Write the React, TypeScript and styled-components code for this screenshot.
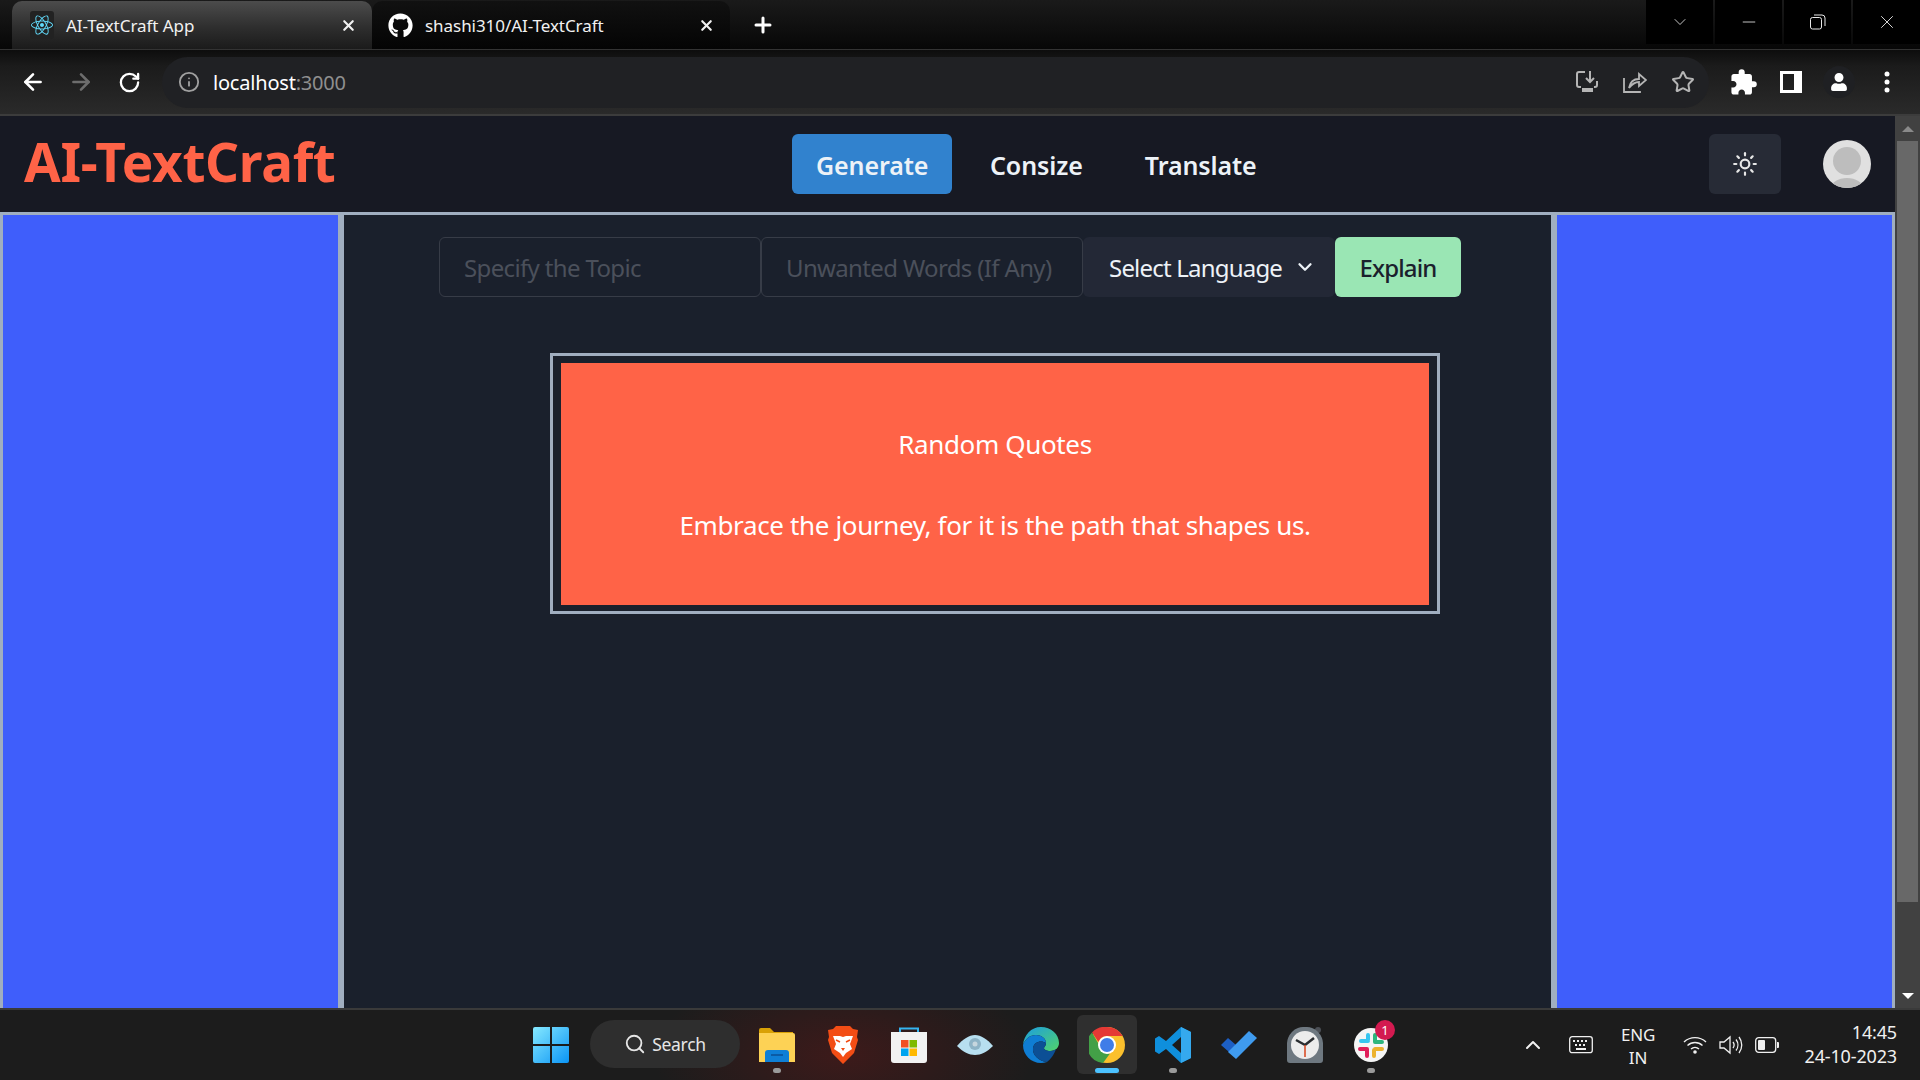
import React from "react";
import styled, { createGlobalStyle } from "styled-components";
import { ArrowLeft, ArrowRight, RotateCw, Info, Star, ChevronDown, ChevronUp, Sun, Search, X, Plus, Minus } from "lucide-react";
import { FaGithub, FaReact, FaUser } from "react-icons/fa";
import { MdExtension } from "react-icons/md";

const GlobalStyle = createGlobalStyle`
  html, body { margin: 0; padding: 0; background: #171923; }
  * { box-sizing: border-box; }
  body { font-family: "Noto Sans", "Open Sans", sans-serif; overflow: hidden; }
`;

const Screen = styled.div`
  width: 1920px;
  height: 1080px;
  display: flex;
  flex-direction: column;
  overflow: hidden;
`;

/* ---- browser chrome ---- */

const TabStrip = styled.div`
  height: 50px;
  flex: none;
  display: flex;
  align-items: flex-end;
  padding-left: 12px;
  background: linear-gradient(#1a1a1a, #070707);
  border-bottom: 1px solid #333;
`;

const Tab = styled.div<{ $active?: boolean }>`
  width: ${(p) => (p.$active ? 360 : 358)}px;
  height: 48px;
  display: flex;
  align-items: center;
  padding: 0 15px 0 ${(p) => (p.$active ? 18 : 16)}px;
  gap: 12px;
  border-radius: 10px 10px 0 0;
  color: #f1f1f1;
  font-size: 17px;
  letter-spacing: -0.05px;
  background: ${(p) => (p.$active ? "linear-gradient(#4c4c4c, #2e2e2e 55%, #1b1b1b)" : "linear-gradient(#111, #040404)")};
`;

const TabTitle = styled.span`
  flex: 1;
`;

const Favicon = styled.span`
  width: 24px;
  height: 28px;
  display: flex;
  align-items: center;
  justify-content: center;
  background: #222;
  border-radius: 3px;
  color: #61dafb;
  font-size: 22px;
`;

const GitIcon = styled.span`
  display: flex;
  color: #fff;
  font-size: 25px;
`;

const NewTab = styled.div`
  width: 36px;
  height: 36px;
  margin: 0 0 6px 15px;
  display: flex;
  align-items: center;
  justify-content: center;
  color: #fff;
`;

const WindowControls = styled.div`
  margin-left: auto;
  align-self: flex-start;
  display: flex;
  gap: 2px;
`;

const WindowButton = styled.div`
  width: 67px;
  height: 44px;
  background: #000;
  display: flex;
  align-items: center;
  justify-content: center;
  color: #e8e8e8;
`;

const Toolbar = styled.div`
  height: 66px;
  flex: none;
  display: flex;
  align-items: center;
  background: linear-gradient(#0d0d0d, #1b1b1b 25%, #2a2a2a);
  border-bottom: 2px solid #3c3c3c;
`;

const NavIcon = styled.div<{ $dim?: boolean }>`
  width: 48px;
  height: 48px;
  flex: none;
  display: flex;
  align-items: center;
  justify-content: center;
  color: ${(p) => (p.$dim ? "#6d6d6d" : "#fff")};
`;

const BackGroup = styled.div`
  display: flex;
  padding-left: 9px;
  width: 162px;
`;

const AddressBar = styled.div`
  width: 1547px;
  height: 51px;
  display: flex;
  align-items: center;
  border-radius: 26px;
  background: #202124;
  padding-left: 16px;
  font-size: 20px;
  letter-spacing: -0.2px;
  color: #fff;
`;

const Host = styled.span`
  margin-left: 13px;
`;

const Port = styled.span`
  color: #8f8f8f;
`;

const AddressTools = styled.div`
  margin-left: auto;
  display: flex;
  padding-right: 2px;
  color: #b5b5b5;
`;

const BarIcon = styled.div`
  width: 48px;
  height: 48px;
  display: flex;
  align-items: center;
  justify-content: center;
`;

const ChromeTools = styled.div`
  display: flex;
  padding-left: 10px;
  color: #fff;
`;

const ProfileCircle = styled.div`
  width: 32px;
  height: 32px;
  border-radius: 50%;
  background: #1f2023;
  display: flex;
  align-items: center;
  justify-content: center;
  font-size: 18px;
`;

/* ---- the page ---- */

const Viewport = styled.div`
  flex: 1;
  min-height: 0;
  display: flex;
`;

const Page = styled.div`
  width: 1895px;
  display: flex;
  flex-direction: column;
  background: #1a202c;
`;

const Navbar = styled.header`
  height: 96px;
  flex: none;
  display: flex;
  align-items: center;
  background: #171923;
  position: relative;
`;

const Logo = styled.h1`
  margin: 0 0 5px 24px;
  width: 768px;
  font-size: 53px;
  font-weight: 700;
  letter-spacing: -0.3px;
  line-height: 1;
  color: #ff6347;
`;

const NavLinks = styled.nav`
  display: flex;
  gap: 14px;
`;

const NavLink = styled.a<{ $active?: boolean }>`
  width: ${(p) => (p.$active ? "160px" : "auto")};
  height: 60px;
  padding: 2px 24px 0;
  display: flex;
  align-items: center;
  border-radius: 6px;
  font-size: 25px;
  font-weight: 600;
  letter-spacing: -0.1px;
  color: #edf2f7;
  background: ${(p) => (p.$active ? "#3182ce" : "transparent")};
`;

const NavRight = styled.div`
  margin-left: auto;
  display: flex;
  align-items: center;
  gap: 42px;
  padding-right: 24px;
`;

const ThemeButton = styled.button`
  width: 72px;
  height: 60px;
  border: 0;
  border-radius: 6px;
  background: #272b36;
  color: #e8e8e8;
  display: flex;
  align-items: center;
  justify-content: center;
`;

const Avatar = styled.div`
  width: 48px;
  height: 48px;
  border-radius: 50%;
  background: #e0e0e0;
  position: relative;
  overflow: hidden;
  &::before {
    content: "";
    position: absolute;
    left: 10px;
    top: 7px;
    width: 28px;
    height: 28px;
    border-radius: 50%;
    background: #bdbdbd;
  }
  &::after {
    content: "";
    position: absolute;
    left: 8px;
    top: 38px;
    width: 32px;
    height: 20px;
    border-radius: 50%;
    background: #bdbdbd;
  }
`;

const Panels = styled.div`
  flex: 1;
  min-height: 0;
  display: flex;
`;

const Aside = styled.aside`
  width: 341px;
  flex: none;
  background: #3f5efb;
  border: 3px solid #a0aec0;
  border-bottom: 0;
`;

const Main = styled.main`
  flex: 1;
  border: 3px solid #a0aec0;
  border-bottom: 0;
  padding: 22px 0 0 95px;
`;

const QueryRow = styled.form`
  width: 1022px;
  height: 60px;
  display: flex;
  margin-bottom: 56px;
`;

const TextInput = styled.input`
  width: 322px;
  height: 60px;
  padding: 0 24px;
  border: 1px solid #373c47;
  border-radius: 6px;
  background: transparent;
  color: #fff;
  font-family: inherit;
  font-size: 24px;
  letter-spacing: -0.65px;
  outline: none;
  &::placeholder {
    color: #4b505b;
    opacity: 1;
  }
`;

const LanguageSelect = styled.button`
  width: 252px;
  height: 60px;
  flex: none;
  display: flex;
  align-items: center;
  justify-content: space-between;
  padding: 0 19px 0 26px;
  border: 0;
  border-radius: 6px;
  background: #232836;
  color: #edf2f7;
  font-family: inherit;
  font-size: 24px;
  letter-spacing: -0.8px;
`;

const ExplainButton = styled.button`
  width: 126px;
  height: 60px;
  flex: none;
  border: 0;
  border-radius: 6px;
  background: #9ae6b4;
  color: #1a202c;
  font-family: inherit;
  font-size: 24px;
  font-weight: 500;
  letter-spacing: -0.85px;
`;

const QuoteFrame = styled.section`
  width: 890px;
  height: 261px;
  margin-left: 111px;
  border: 3px solid #a0aec0;
  padding: 7px 8px 6px 8px;
`;

const QuoteBody = styled.div`
  height: 100%;
  background: #ff6347;
  padding-top: 63px;
  display: flex;
  flex-direction: column;
  align-items: center;
  gap: 45px;
  color: #fff;
  font-size: 26px;
  line-height: 36px;
  letter-spacing: -0.36px;
`;

const Scrollbar = styled.div`
  width: 25px;
  display: flex;
  flex-direction: column;
  align-items: center;
  background: #414141;
`;

const ScrollArrow = styled.div<{ $down?: boolean; $color: string }>`
  width: 0;
  height: 0;
  flex: none;
  border-left: 6px solid transparent;
  border-right: 6px solid transparent;
  ${(p) => (p.$down ? `border-top: 6px solid ${p.$color}; margin-top: auto; margin-bottom: 9px;` : `border-bottom: 6px solid ${p.$color}; margin-top: 10px;`)}
`;

const ScrollThumb = styled.div`
  width: 21px;
  height: 761px;
  margin-top: 9px;
  background: #686868;
`;

/* ---- taskbar ---- */

const Taskbar = styled.footer`
  height: 72px;
  flex: none;
  display: grid;
  grid-template-columns: 518px auto 1fr;
  border-top: 2px solid #3a3a3a;
  background: radial-gradient(ellipse 190px 90px at 843px 45px, #3d1a1a, transparent), #1c1c1c;
`;

const TaskIcons = styled.div`
  display: flex;
  align-items: flex-start;
`;

const TaskItem = styled.div`
  width: 66px;
  height: 70px;
  flex: none;
  padding: 5px 3px 6px;
  position: relative;
`;

const TaskTile = styled.div<{ $active?: boolean }>`
  height: 59px;
  display: flex;
  align-items: center;
  justify-content: center;
  border-radius: 6px;
  background: ${(p) => (p.$active ? "#2f2f2f" : "transparent")};
`;

const RunningMark = styled.span<{ $active?: boolean }>`
  position: absolute;
  left: 50%;
  bottom: 7px;
  width: ${(p) => (p.$active ? 24 : 8)}px;
  height: 5px;
  margin-left: ${(p) => (p.$active ? -12 : -4)}px;
  border-radius: 3px;
  background: ${(p) => (p.$active ? "#4cc2ff" : "#9a9a9a")};
`;

const Badge = styled.span`
  position: absolute;
  left: 37px;
  top: 10px;
  width: 20px;
  height: 20px;
  border-radius: 50%;
  background: #d31a50;
  color: #fff;
  font-size: 13px;
  line-height: 20px;
  text-align: center;
`;

const SearchPill = styled.div`
  width: 150px;
  height: 48px;
  margin: 10px 4px 0 6px;
  flex: none;
  display: flex;
  align-items: center;
  justify-content: center;
  gap: 6px;
  border-radius: 24px;
  background: #2e2e2e;
  color: #e6e6e6;
  font-size: 17.5px;
  letter-spacing: -0.3px;
`;

const Tray = styled.div`
  display: flex;
  align-items: center;
  justify-content: flex-end;
  padding-right: 23px;
  color: #f0f0f0;
`;

const TraySlot = styled.div<{ $w: number }>`
  width: ${(p) => p.$w}px;
  flex: none;
  display: flex;
  justify-content: center;
`;

const Lang = styled.div`
  width: 72px;
  padding-right: 6px;
  text-align: center;
  font-size: 17px;
  line-height: 23px;
  letter-spacing: -0.2px;
  margin-top: 1px;
`;

const Clock = styled.div`
  width: 112px;
  text-align: right;
  font-size: 18px;
  line-height: 24px;
  letter-spacing: -0.15px;
  margin-bottom: 3px;
`;

/* ---- drawn icons ---- */

const DownloadIcon = () => (
  <svg width="24" height="24" viewBox="0 0 24 24" fill="none" stroke="#b5b5b5" strokeWidth="2">
    <path d="M10 2H4a2 2 0 0 0-2 2v11a2 2 0 0 0 2 2h2M22 11v4a2 2 0 0 1-2 2h-1" />
    <path d="M15 1v10M11 8l4 4 4-4" />
    <path d="M7 18h11v4H7z" fill="#b5b5b5" stroke="none" />
  </svg>
);

const ShareIcon = () => (
  <svg width="24" height="24" viewBox="0 0 24 24" fill="none" stroke="#b5b5b5" strokeWidth="1.8">
    <path d="M1 8v14h16v-1" />
    <path d="M6 18c1-6 5-9 10-9V4l7 6-7 6v-4c-4 0-7 2-10 6z" />
  </svg>
);

const SidebarIcon = () => (
  <svg width="22" height="22" viewBox="0 0 22 22">
    <path d="M0 0h22v22H0zM3 3v16h11V3z" fill="#fff" fillRule="evenodd" />
  </svg>
);

const Dots = () => (
  <svg width="6" height="22" viewBox="0 0 6 22" fill="#fff">
    <circle cx="3" cy="3" r="2.5" />
    <circle cx="3" cy="11" r="2.5" />
    <circle cx="3" cy="19" r="2.5" />
  </svg>
);

const RestoreIcon = () => (
  <svg width="16" height="16" viewBox="0 0 16 16" fill="none" stroke="#e8e8e8" strokeWidth="1">
    <rect x="0.5" y="3.5" width="11" height="11.5" rx="2" />
    <path d="M4 1h8a3 3 0 0 1 3 3v8" />
  </svg>
);

const WinLogo = () => (
  <svg width="36" height="36" viewBox="0 0 36 36">
    <defs>
      <linearGradient id="win" x1="0" y1="0" x2="1" y2="1">
        <stop offset="0" stopColor="#86e9ff" />
        <stop offset="1" stopColor="#0a94f5" />
      </linearGradient>
    </defs>
    <path d="M2 0h15v17H0V2a2 2 0 0 1 2-2zM19 0h15a2 2 0 0 1 2 2v15H19zM0 19h17v17H2a2 2 0 0 1-2-2zM19 19h17v15a2 2 0 0 1-2 2H19z" fill="url(#win)" />
  </svg>
);

const FolderIcon = () => (
  <svg width="36" height="34" viewBox="0 0 36 34">
    <path d="M0 2a2 2 0 0 1 2-2h9l4 4h19v6H0z" fill="#d9a106" />
    <path d="M0 5h34a2 2 0 0 1 2 2v27H0z" fill="#fdd255" />
    <path d="M6 34V25a3 3 0 0 1 3-3h18a3 3 0 0 1 3 3v9z" fill="#0f7fd6" />
    <path d="M12 27h12" stroke="#0b4f94" strokeWidth="1.5" />
  </svg>
);

const BraveIcon = () => (
  <svg width="30" height="38" viewBox="0 0 30 38">
    <path d="M8 0h14l3 3 5 1-1 7 1 3-4 13-11 11L4 27 0 14l1-3-1-7 5-1z" fill="#f34d15" />
    <path d="M5 10l7 0 3 1 3-1 7 0-3 8 2 5-6 4-3 4-3-4-6-4 2-5z" fill="#fff" />
    <path d="M13 22h4l-2 3z" fill="#f34d15" />
    <path d="M8 14l4 2M22 14l-4 2" stroke="#f34d15" strokeWidth="1.5" />
  </svg>
);

const StoreIcon = () => (
  <svg width="36" height="36" viewBox="0 0 36 36">
    <path d="M9 6V1.500h18V6" fill="none" stroke="#35b4f0" strokeWidth="2" />
    <path d="M0 5h36v28a3 3 0 0 1-3 3H3a3 3 0 0 1-3-3z" fill="#f2f2f2" />
    <path d="M10 13h7.500v7.500H10z" fill="#f25022" />
    <path d="M18.500 13H26v7.500h-7.500z" fill="#7fba00" />
    <path d="M10 21.500h7.500V29H10z" fill="#00a4ef" />
    <path d="M18.500 21.500H26V29h-7.500z" fill="#ffb900" />
  </svg>
);

const EyeIcon = () => (
  <svg width="36" height="20" viewBox="0 0 36 20">
    <path d="M0 11C6 4 12 0 18 0s12 4 18 11c-6 6-12 9-18 9S6 17 0 11z" fill="#b7dff0" />
    <circle cx="18" cy="9" r="6" fill="#8db3c6" />
    <circle cx="18" cy="9" r="2.500" fill="#c6d6de" />
  </svg>
);

const EdgeIcon = () => (
  <svg width="36" height="36" viewBox="0 0 36 36">
    <defs>
      <linearGradient id="edgeTop" x1="0" y1="0" x2="1" y2="1">
        <stop offset="0" stopColor="#1b9de2" />
        <stop offset="1" stopColor="#51d36a" />
      </linearGradient>
    </defs>
    <path d="M18 0c10 0 18 7 18 16 0 5-4 8-9 8-3 0-6-1-6-3 0-1 2-2 2-5 0-5-5-8-10-8-6 0-11 4-13 10C1 8 8 0 18 0z" fill="url(#edgeTop)" />
    <path d="M0 18C2 12 7 8 13 8c5 0 10 3 10 8-4-3-12-2-13 5-1 7 6 13 14 14-2 .7-4 1-6 1C8 36 0 28 0 18z" fill="#0f7dd3" />
    <path d="M10 21c1-7 9-8 13-5 0 3-2 4-2 5 0 2 3 3 6 3 2 0 4-.5 6-2-2 6-6 11-9 13-8-1-15-7-14-14z" fill="#0c4f95" />
  </svg>
);

const ChromeIcon = () => (
  <svg width="36" height="36" viewBox="0 0 36 36">
    <circle cx="18" cy="18" r="18" fill="#fbc02d" />
    <path d="M18 0a18 18 0 0 1 15.600 9H18a9 9 0 0 0-8.500 6L3 5.500A18 18 0 0 1 18 0z" fill="#e53935" />
    <path d="M3 5.500l7.500 13A9 9 0 0 0 21 26.500L14 36A18 18 0 0 1 3 5.500z" fill="#43a047" />
    <circle cx="18" cy="18" r="9" fill="#fff" />
    <circle cx="18" cy="18" r="7" fill="#3f7de8" />
  </svg>
);

const VsCodeIcon = () => (
  <svg width="36" height="36" viewBox="0 0 36 36">
    <path d="M26 0l10 5v26l-10 5-15-14-7 5-4-2.500V11.500L4 9l7 5zM26 10l-9 8 9 8z" fill="#0f8fdc" fillRule="evenodd" />
    <path d="M26 0l10 5v26l-10 5z" fill="#35a9ee" />
  </svg>
);

const TodoIcon = () => (
  <svg width="36" height="28" viewBox="0 0 36 28">
    <path d="M0 14l7-7 8 7-7 7z" fill="#1d5fc4" />
    <path d="M7 21l4-4L28 0l8 7-21 21z" fill="#3f9bef" />
  </svg>
);

const ClockIcon = () => (
  <svg width="36" height="36" viewBox="0 0 36 36">
    <circle cx="31" cy="3" r="3" fill="#4b4f55" />
    <path d="M18 0a17 17 0 0 1 18 18v15a3 3 0 0 1-3 3H3a3 3 0 0 1-3-3V18A17 17 0 0 1 18 0z" fill="#6e7880" />
    <circle cx="18" cy="18" r="14" fill="#ececec" />
    <path d="M18 18L9 13M18 18l9-7" stroke="#2a2d30" strokeWidth="2.500" />
    <path d="M18 18v12" stroke="#d8441c" strokeWidth="1.500" />
  </svg>
);

const SlackIcon = () => (
  <svg width="36" height="36" viewBox="0 0 36 36">
    <circle cx="18" cy="18" r="17" fill="#f5f5f5" />
    <g strokeWidth="4" strokeLinecap="round">
      <path d="M15 8v5M8 14h7" stroke="#36c5f0" />
      <path d="M22 8v7M23 15h6" stroke="#2eb67d" />
      <path d="M21 29v-6M22 22h7" stroke="#ecb22e" />
      <path d="M14 29v-7M7 22h7" stroke="#e01e5a" />
    </g>
  </svg>
);

const KeyboardIcon = () => (
  <svg width="24" height="18" viewBox="0 0 24 18" fill="none" stroke="#f0f0f0" strokeWidth="1.300">
    <rect x="0.700" y="0.700" width="22.600" height="16" rx="2.500" />
    <path d="M4 5h2M8 5h2M12 5h2M16 5h2M6 9h2M10 9h2M14 9h2M7 13h10" strokeWidth="1.800" />
  </svg>
);

const WifiIcon = () => (
  <svg width="24" height="18" viewBox="0 0 24 18" fill="none" stroke="#f0f0f0" strokeWidth="1.400">
    <path d="M1 6a16 16 0 0 1 22 0M4.500 9.500a11 11 0 0 1 15 0M8 13a6 6 0 0 1 8 0" />
    <circle cx="12" cy="16" r="1.800" fill="#f0f0f0" stroke="none" />
  </svg>
);

const SpeakerIcon = () => (
  <svg width="24" height="20" viewBox="0 0 24 20" fill="none" stroke="#f0f0f0" strokeWidth="1.300">
    <path d="M1 7v6h4l6 5V2L5 7z" />
    <path d="M14 7a5 5 0 0 1 0 6M17 4.500a9 9 0 0 1 0 11M20 2a13 13 0 0 1 0 16" />
  </svg>
);

const BatteryIcon = () => (
  <svg width="24" height="16" viewBox="0 0 24 16" fill="none">
    <rect x="0.700" y="0.700" width="20" height="14.600" rx="3" stroke="#f0f0f0" strokeWidth="1.300" />
    <rect x="3" y="3" width="7" height="10" rx="1" fill="#f0f0f0" />
    <path d="M22 5h1a1 1 0 0 1 1 1v4a1 1 0 0 1-1 1h-1z" fill="#f0f0f0" />
  </svg>
);

const leftApps = [
  { key: "folder", icon: <FolderIcon />, running: true },
  { key: "brave", icon: <BraveIcon /> },
  { key: "store", icon: <StoreIcon /> },
  { key: "eye", icon: <EyeIcon /> },
  { key: "edge", icon: <EdgeIcon /> },
  { key: "chrome", icon: <ChromeIcon />, active: true },
  { key: "code", icon: <VsCodeIcon />, running: true },
  { key: "todo", icon: <TodoIcon /> },
  { key: "clock", icon: <ClockIcon /> },
  { key: "slack", icon: <SlackIcon />, running: true, badge: "1" },
];

const App = () => {
  return (
    <Screen>
      <GlobalStyle />
      <TabStrip>
        <Tab $active>
          <Favicon>
            <FaReact />
          </Favicon>
          <TabTitle>AI-TextCraft App</TabTitle>
          <X size={17} strokeWidth={3} />
        </Tab>
        <Tab>
          <GitIcon>
            <FaGithub />
          </GitIcon>
          <TabTitle>shashi310/AI-TextCraft</TabTitle>
          <X size={17} strokeWidth={3} />
        </Tab>
        <NewTab>
          <Plus size={24} strokeWidth={3} />
        </NewTab>
        <WindowControls>
          <WindowButton>
            <ChevronDown size={20} strokeWidth={1} />
          </WindowButton>
          <WindowButton>
            <Minus size={20} strokeWidth={1} />
          </WindowButton>
          <WindowButton>
            <RestoreIcon />
          </WindowButton>
          <WindowButton>
            <X size={22} strokeWidth={1} />
          </WindowButton>
        </WindowControls>
      </TabStrip>

      <Toolbar>
        <BackGroup>
          <NavIcon>
            <ArrowLeft size={26} strokeWidth={2.4} />
          </NavIcon>
          <NavIcon $dim>
            <ArrowRight size={26} strokeWidth={2.4} />
          </NavIcon>
          <NavIcon>
            <RotateCw size={23} strokeWidth={2.4} />
          </NavIcon>
        </BackGroup>
        <AddressBar>
          <Info size={22} color="#a0a0a0" strokeWidth={2} />
          <Host>
            localhost<Port>:3000</Port>
          </Host>
          <AddressTools>
            <BarIcon>
              <DownloadIcon />
            </BarIcon>
            <BarIcon>
              <ShareIcon />
            </BarIcon>
            <BarIcon>
              <Star size={24} strokeWidth={2} />
            </BarIcon>
          </AddressTools>
        </AddressBar>
        <ChromeTools>
          <BarIcon>
            <MdExtension size={29} />
          </BarIcon>
          <BarIcon>
            <SidebarIcon />
          </BarIcon>
          <BarIcon>
            <ProfileCircle>
              <FaUser />
            </ProfileCircle>
          </BarIcon>
          <BarIcon>
            <Dots />
          </BarIcon>
        </ChromeTools>
      </Toolbar>

      <Viewport>
        <Page>
          <Navbar>
            <Logo>AI-TextCraft</Logo>
            <NavLinks>
              <NavLink $active>Generate</NavLink>
              <NavLink>Consize</NavLink>
              <NavLink>Translate</NavLink>
            </NavLinks>
            <NavRight>
              <ThemeButton aria-label="Toggle theme">
                <Sun size={26} strokeWidth={2} />
              </ThemeButton>
              <Avatar />
            </NavRight>
          </Navbar>
          <Panels>
            <Aside />
            <Main>
              <QueryRow>
                <TextInput placeholder="Specify the Topic" />
                <TextInput placeholder="Unwanted Words (If Any)" />
                <LanguageSelect type="button">
                  Select Language
                  <ChevronDown size={22} strokeWidth={2.5} />
                </LanguageSelect>
                <ExplainButton type="button">Explain</ExplainButton>
              </QueryRow>
              <QuoteFrame>
                <QuoteBody>
                  <div>Random Quotes</div>
                  <div>Embrace the journey, for it is the path that shapes us.</div>
                </QuoteBody>
              </QuoteFrame>
            </Main>
            <Aside />
          </Panels>
        </Page>
        <Scrollbar>
          <ScrollArrow $color="#8a8a8a" />
          <ScrollThumb />
          <ScrollArrow $down $color="#ffffff" />
        </Scrollbar>
      </Viewport>

      <Taskbar>
        <div />
        <TaskIcons>
          <TaskItem>
            <TaskTile>
              <WinLogo />
            </TaskTile>
          </TaskItem>
          <SearchPill>
            <Search size={22} strokeWidth={2} />
            Search
          </SearchPill>
          {leftApps.map((app) => (
            <TaskItem key={app.key}>
              <TaskTile $active={app.active}>{app.icon}</TaskTile>
              {app.badge && <Badge>{app.badge}</Badge>}
              {(app.running || app.active) && <RunningMark $active={app.active} />}
            </TaskItem>
          ))}
        </TaskIcons>
        <Tray>
          <TraySlot $w={48}>
            <ChevronUp size={24} strokeWidth={2} />
          </TraySlot>
          <TraySlot $w={48}>
            <KeyboardIcon />
          </TraySlot>
          <Lang>
            ENG
            <br />
            IN
          </Lang>
          <TraySlot $w={36}>
            <WifiIcon />
          </TraySlot>
          <TraySlot $w={36}>
            <SpeakerIcon />
          </TraySlot>
          <TraySlot $w={36}>
            <BatteryIcon />
          </TraySlot>
          <Clock>
            14:45
            <br />
            24-10-2023
          </Clock>
        </Tray>
      </Taskbar>
    </Screen>
  );
};

export default App;
